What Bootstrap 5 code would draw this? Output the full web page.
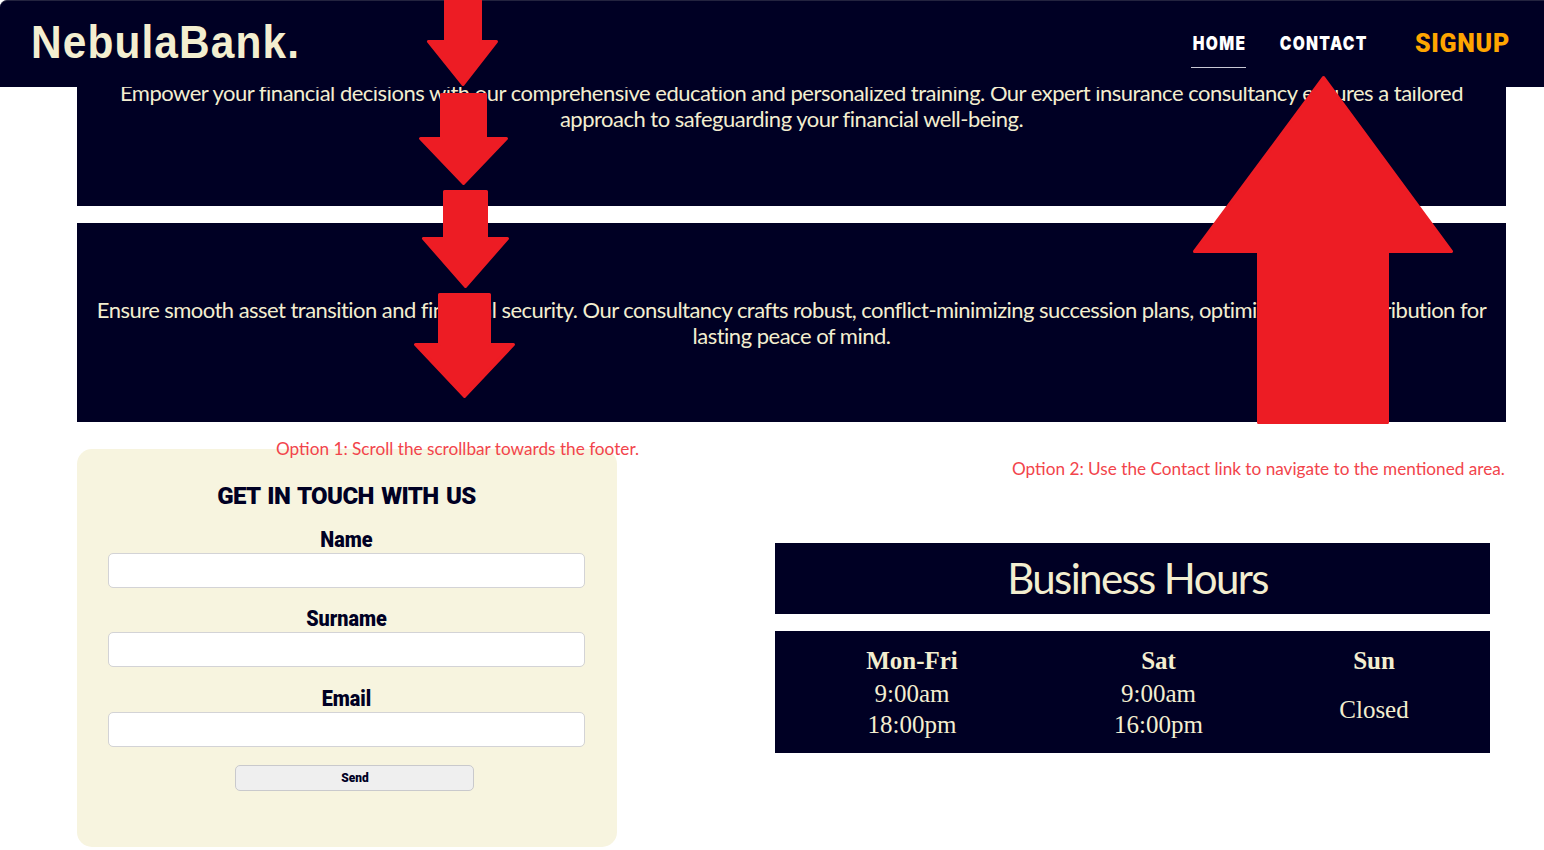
<!DOCTYPE html>
<html lang="en">
<head>
<meta charset="utf-8">
<title>NebulaBank</title>
<meta name="viewport" content="width=device-width, initial-scale=1">
<link href="https://cdn.jsdelivr.net/npm/bootstrap@5.3.0/dist/css/bootstrap.min.css" rel="stylesheet">
<style>
:root{--navy:#000024;--cream:#f3eed0;--red:#ed1c24}
body{width:1544px;height:850px;overflow:hidden;background:#fff;color:var(--navy)}
.fit{display:inline-block;white-space:nowrap}
.topbar{height:87px;background:var(--navy);border-top:1px solid #23233f;border-top-left-radius:7px;padding:0 34px 0 31px}
.logo{font:700 46px/1 "Liberation Sans",sans-serif;letter-spacing:1.2px;color:var(--cream);transform:scaleX(.922);transform-origin:left;margin-top:-5px}
.blocky{font-family:Roboto,sans-serif;font-weight:900}
.toplink{width:55px;margin-right:33px;font-family:Inter,sans-serif;font-weight:900;font-size:19px;line-height:24px;color:#fff;text-decoration:none;padding:12px 0 11px;border-bottom:1px solid transparent}
.toplink.wide{width:87px;margin-right:49px}
.toplink.current{border-color:#c8c8d4}
.toplink span{letter-spacing:1.6px;margin-right:-1.6px;transform:scaleX(.82)}
.signup{width:95px;font-size:25px;line-height:26px;color:orange;text-decoration:none;letter-spacing:.7px}
.pagebody{margin-top:-80.5px;padding:0 38px 0 77px}
.service{height:199px;background:var(--navy);color:var(--cream);font:400 22px/26px Lato,sans-serif;letter-spacing:-.5px;padding-top:1px;margin-bottom:17.5px}
.service:first-child{padding-top:0}
.touch{width:540px;height:398.5px;background:#f7f4df;border-radius:15px;padding:33px 32px 0 31px}
.touch h2{font-size:24px;line-height:28px;letter-spacing:-.6px;word-spacing:2px;margin:0 0 17px}
.touch label{font:900 22px/26px Roboto,sans-serif;transform:scaleX(.9)}
.field{height:79.5px}
.touch .form-control{height:35px;border:1px solid #d3d3d6;border-radius:5px;padding:0}
.send{width:239px;height:26px;margin-left:16px;position:relative;top:-1px;background:#efefef;border:1px solid #c9c9cc;border-radius:5px;font:900 13px/1 Roboto,sans-serif;color:var(--navy)}
.send span{transform:scaleX(.92)}
.hours{width:715px;margin:94px 16px 0 0}
.hours>div{background:var(--navy);color:var(--cream)}
.hours-title{height:71px;margin-bottom:17.5px;padding-left:10px;font:400 42px/71px Lato,sans-serif;letter-spacing:-1.6px}
.hours-grid{height:122px;display:grid;grid-template-columns:274px 219px 212px;padding-top:13px;font:25px/31px "Liberation Serif",serif}
.hours-grid b{display:block;line-height:34px}
.arrows{position:absolute;left:0;top:0;z-index:5;fill:var(--red);stroke:var(--red);stroke-width:3;stroke-linejoin:round}
.note{position:absolute;z-index:6;font:17.2px/22px Lato,sans-serif;color:#f2444b;white-space:nowrap}
.note-scroll{left:276px;top:438px}
.note-link{left:1012px;top:458px}
</style>
</head>
<body class="position-relative">
<header class="topbar position-relative z-3 d-flex align-items-center justify-content-between">
  <span class="logo fit">NebulaBank.</span>
  <nav class="d-flex align-items-center">
    <a class="toplink current d-flex justify-content-center" href="#"><span class="fit">HOME</span></a>
    <a class="toplink wide d-flex justify-content-center" href="#contact"><span class="fit">CONTACT</span></a>
    <a class="signup fit blocky" href="#">SIGNUP</a>
  </nav>
</header>
<main class="pagebody">
  <section class="service d-flex flex-column align-items-center justify-content-center text-center">
    <span class="fit">Empower your financial decisions with our comprehensive education and personalized training. Our expert insurance consultancy ensures a tailored</span>
    <span class="fit">approach to safeguarding your financial well-being.</span>
  </section>
  <section class="service d-flex flex-column align-items-center justify-content-center text-center">
    <span class="fit" style="letter-spacing:-.54px">Ensure smooth asset transition and financial security. Our consultancy crafts robust, conflict-minimizing succession plans, optimizing asset distribution for</span>
    <span class="fit">lasting peace of mind.</span>
  </section>
  <div class="d-flex justify-content-between align-items-start" style="padding-top:9px" id="contact">
    <form class="touch text-center">
      <h2 class="blocky">GET IN TOUCH WITH US</h2>
      <div class="field"><label class="fit d-block" for="n">Name</label><input class="form-control" id="n"></div>
      <div class="field"><label class="fit d-block" for="s">Surname</label><input class="form-control" id="s"></div>
      <div class="field"><label class="fit d-block" for="e">Email</label><input class="form-control" id="e"></div>
      <button class="send" type="button"><span class="fit">Send</span></button>
    </form>
    <section class="hours">
      <div class="hours-title text-center"><span class="fit">Business Hours</span></div>
      <div class="hours-grid text-center">
        <div><b>Mon-Fri</b>9:00am<br>18:00pm</div>
        <div><b>Sat</b>9:00am<br>16:00pm</div>
        <div><b>Sun</b><div class="mt-3">Closed</div></div>
      </div>
    </section>
  </div>
</main>
<svg class="arrows" width="1544" height="850" viewBox="0 0 1544 850">
  <path d="M445.500 -5H480.500V41.500H496.500L463 84.500L428.500 41.500H445.500Z"/>
  <path d="M441.500 94.500H485.500V138.500H506.500L463.500 183.500L420.500 138.500H441.500Z"/>
  <path d="M444.500 191.500H486.500V238.500H507.500L465.500 286.500L423.500 238.500H444.500Z"/>
  <path d="M439.500 294.500H489.500V344.500H513.500L464.500 396.500L415.500 344.500H439.500Z"/>
  <path d="M1323.500 77.500L1451.500 251.500H1387.500V422.500H1258.500V251.500H1194.500Z"/>
</svg>
<div class="note note-scroll">Option 1: Scroll the scrollbar towards the footer.</div>
<div class="note note-link">Option 2: Use the Contact link to navigate to the mentioned area.</div>
</body>
</html>
